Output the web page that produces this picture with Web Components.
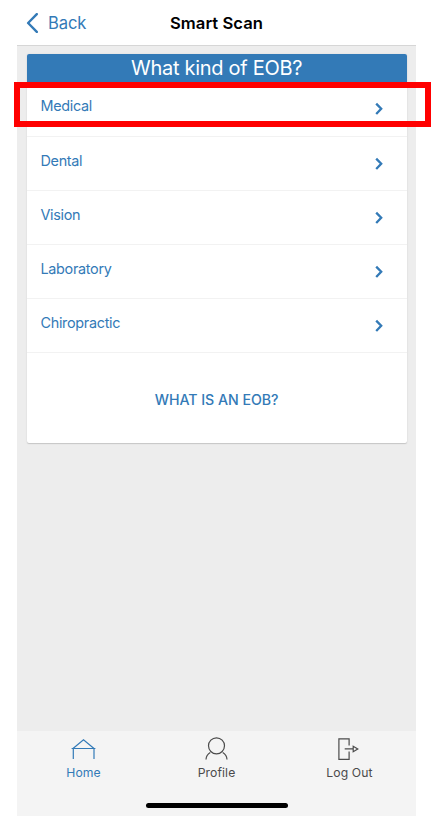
<!DOCTYPE html>
<html lang="en">
<head>
<meta charset="utf-8">
<title>Smart Scan</title>
<style>
body{margin:0;background:#fff;font-family:Inter,"Liberation Sans",sans-serif;color:#337ab7}
</style>
</head>
<body>
<smart-scan-app></smart-scan-app>
<script>
class NavHeader extends HTMLElement{
  constructor(){super();this.attachShadow({mode:'open'}).innerHTML=`
  <style>
  :host{display:grid;grid-template-columns:1fr auto 1fr;align-items:center;height:45px;border-bottom:1px solid #d6d6d6;background:#fff;box-sizing:content-box}
  .back{display:flex;align-items:center;gap:8.5px;padding-left:8.5px;font-size:16.6px;letter-spacing:-.15px;line-height:20px}
  svg{display:block}
  h1{margin:0;font-size:16.6px;font-weight:600;letter-spacing:.05px;line-height:20px;color:#000}
  </style>
  <div class="back"><svg width="14" height="20" viewBox="0 0 14 20"><path d="M10.8 1.1 2.1 10l8.7 8.9" fill="none" stroke="#337ab7" stroke-width="2.4" stroke-linecap="round" stroke-linejoin="round"/></svg><span>Back</span></div>
  <h1><slot></slot></h1><div></div>`}
}
customElements.define('nav-header',NavHeader);

class EobRow extends HTMLElement{
  constructor(){super();this.attachShadow({mode:'open'}).innerHTML=`
  <style>
  :host{display:flex;justify-content:space-between;box-sizing:border-box;height:54.2px;border-bottom:1px solid #f2f2f2;padding:14px 22.5px 0 13.7px;font-size:14.4px;letter-spacing:-.3px;line-height:20px}
  svg{display:block;margin-top:6px}
  </style>
  <span><slot></slot></span>
  <svg width="10" height="14" viewBox="0 0 10 14"><path d="m2.2 1.6 5 5.2-5 5.2" fill="none" stroke="#337ab7" stroke-width="2.3"/></svg>`}
}
customElements.define('eob-row',EobRow);

class EobCard extends HTMLElement{
  constructor(){super();this.attachShadow({mode:'open'}).innerHTML=`
  <style>
  :host{display:flex;flex-direction:column;box-sizing:border-box;height:389px;background:#fff;border-radius:2px;box-shadow:0 1px 1px #c6c6c6,0 0 2px #ddd;overflow:hidden}
  h2{margin:0;height:28.1px;box-sizing:border-box;padding-top:1px;background:#337ab7;color:#fff;text-align:center;font-size:20px;letter-spacing:-.28px;font-weight:400;line-height:27px}
  .more{flex:1;display:flex;align-items:center;justify-content:center;font-size:14.2px;letter-spacing:-.04px;font-weight:450;padding-top:2px}
  </style>
  <h2>What kind of EOB?</h2><slot></slot><div class="more"><span>WHAT IS AN EOB?</span></div>`}
}
customElements.define('eob-card',EobCard);

const icons={
  home:'<path d="M2.7 11.7 13.5 2.8l10.8 8.9M1.6 11.5h23.8M3.3 11.5V22M24 11.5V22"/>',
  profile:'<circle cx="13.5" cy="8.8" r="8"/><path d="M3 22.5c.1-3 1.6-5.4 4.3-7M24 22.5c-.1-3-1.6-5.4-4.3-7"/>',
  logout:'<path d="M13.1 8.4V1.9H2.9v20.5h10.2v-7.9M8.7 11.9h8.5M17.2 9.2v5.5l4.6-2.8z"/>'
};
class TabItem extends HTMLElement{
  constructor(){super();this.attachShadow({mode:'open'}).innerHTML=`
  <style>
  :host{display:flex;flex-direction:column;align-items:center;color:#4b4b4b;font-size:12.2px;line-height:16px;letter-spacing:.1px;padding-top:6px;gap:5px}
  :host([icon=home]){color:#337ab7}
  svg{display:block;fill:none;stroke:currentColor;stroke-width:1.2}
  </style>
  <svg width="27" height="23" viewBox="0 0 27 23"></svg><span><slot></slot></span>`}
  connectedCallback(){this.shadowRoot.querySelector('svg').innerHTML=icons[this.getAttribute('icon')]}
}
customElements.define('tab-item',TabItem);

class SmartScanApp extends HTMLElement{
  constructor(){super();this.attachShadow({mode:'open'}).innerHTML=`
  <style>
  :host{display:block;position:relative;height:822px}
  .screen{display:flex;flex-direction:column;width:399px;height:816px;margin-left:17px;background:#ededed}
  main{flex:1;padding:8.4px 9.5px 0 9.8px}
  footer{height:85px;background:#f4f4f4;display:flex;flex-direction:column;justify-content:space-between;align-items:center}
  nav{display:grid;grid-template-columns:repeat(3,1fr);width:100%}
  .bar{width:142px;height:5px;border-radius:3px;background:#000;margin-bottom:8.5px}
  .mark{position:absolute;left:14px;top:82px;width:417px;height:45px;box-sizing:border-box;border:6px solid #f00}
  </style>
  <div class="screen">
    <nav-header>Smart Scan</nav-header>
    <main><eob-card><eob-row>Medical</eob-row><eob-row>Dental</eob-row><eob-row>Vision</eob-row><eob-row>Laboratory</eob-row><eob-row>Chiropractic</eob-row></eob-card></main>
    <footer><nav><tab-item icon="home">Home</tab-item><tab-item icon="profile">Profile</tab-item><tab-item icon="logout">Log Out</tab-item></nav><div class="bar"></div></footer>
  </div>
  <div class="mark"></div>`}
}
customElements.define('smart-scan-app',SmartScanApp);
</script>
</body>
</html>
